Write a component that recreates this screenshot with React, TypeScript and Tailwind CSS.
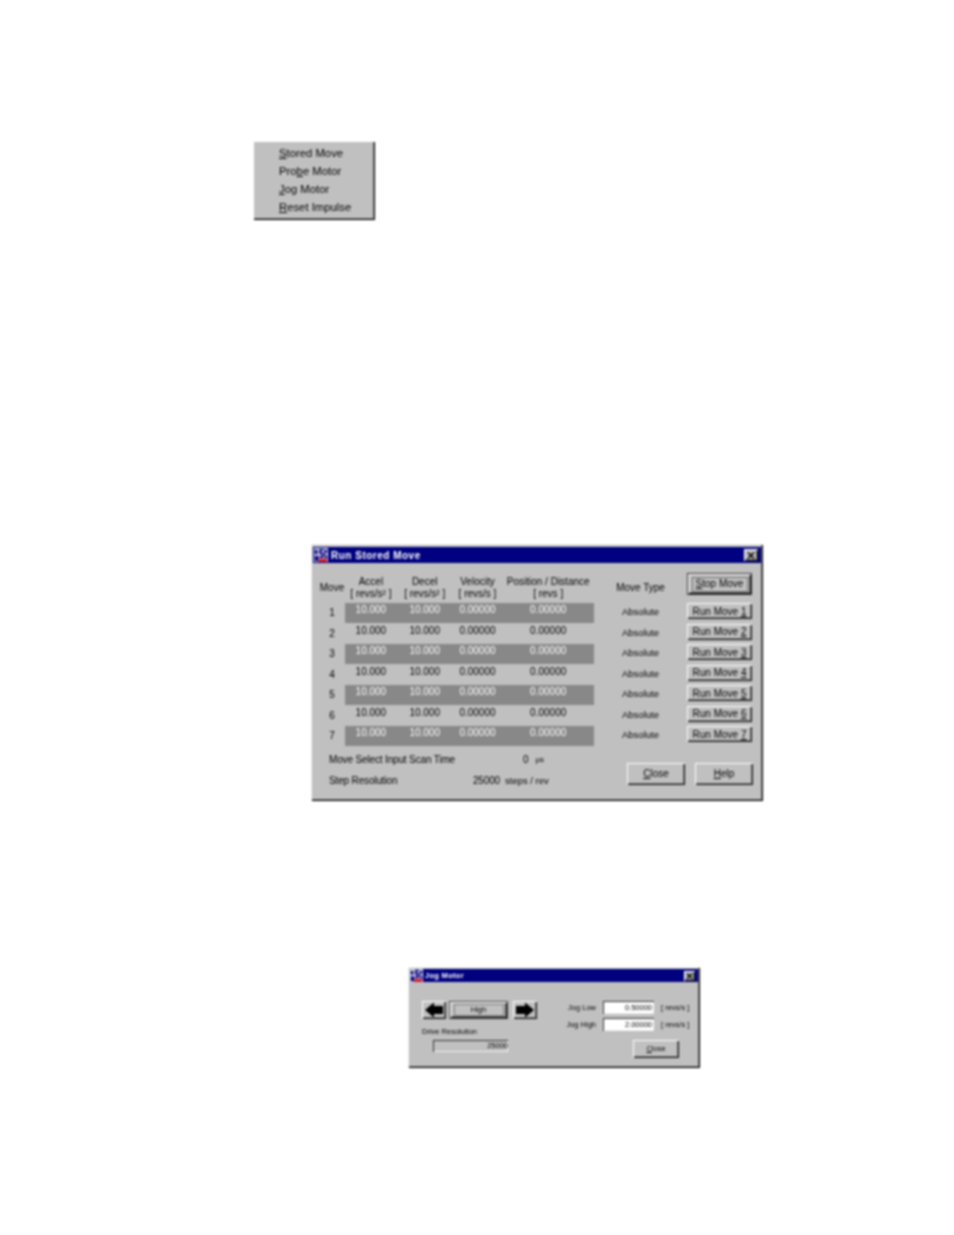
const moves = [1, 2, 3, 4, 5, 6, 7];

const raised = "bg-[#c0c0c0] shadow-[inset_1px_1px_0_#ffffff,inset_-1px_-1px_0_#181818,inset_-2px_-2px_0_#707070]";
const sunken = "shadow-[inset_1px_1px_0_#303030,inset_-1px_-1px_0_#f0f0f0]";

function AppIcon({ size }: { size: number }) {
  return (
    <svg width={size} height={size} viewBox="0 0 16 16" className="shrink-0">
      <rect width="16" height="16" fill="#d8d8e8" />
      <path d="M1 2h3v5H1zM6 1h5v2H8v2h3v6H6V9h3V7H6zM12 2h3v2l-2 3 2 3v2h-2l-1-3z" fill="#000080" />
      <rect x="1" y="9" width="4" height="6" fill="#000080" />
      <rect x="5" y="12" width="10" height="4" fill="#d02030" />
    </svg>
  );
}

function CloseBox({ small }: { small?: boolean }) {
  return (
    <div className={`flex items-center justify-center ${raised} ${small ? "h-[10px] w-[11px]" : "h-[12px] w-[14px]"}`}>
      <svg width={small ? 7 : 8} height={small ? 6 : 7} viewBox="0 0 8 7">
        <path d="M1 0.5l6 6M7 0.5l-6 6" stroke="#000" strokeWidth="1.6" />
      </svg>
    </div>
  );
}

function ContextMenu() {
  return (
    <div className="ml-[253px] mt-[141px] h-[79px] w-[122px] bg-[#c0c0c0] pl-[26px] pt-[3px] text-[11.3px] leading-[18px] text-[#000000] shadow-[inset_1px_1px_0_#ffffff,inset_-1px_-1px_0_#000000,inset_-2px_-2px_0_#707070]">
      <div><u>S</u>tored Move</div>
      <div>Pro<u>b</u>e Motor</div>
      <div><u>J</u>og Motor</div>
      <div><u>R</u>eset Impulse</div>
    </div>
  );
}

function StoredMoveDialog() {
  return (
    <div className="ml-[311px] mt-[324px] h-[257px] w-[452px] bg-[#c0c0c0] px-[2px] pt-[3px] text-[10px] text-[#000000] shadow-[inset_1px_1px_0_#f0f0f0,inset_-1px_-1px_0_#000000,inset_-2px_-2px_0_#707070]">
      {/* Title bar */}
      <div className="flex h-[16px] items-center justify-between bg-[#000080] pl-[1px] pr-[3px]">
        <div className="flex items-center gap-[3px]">
          <AppIcon size={14} />
          <span className="text-[10px] font-bold tracking-[0.5px] text-[#ffffff]">Run Stored Move</span>
        </div>
        <CloseBox />
      </div>

      <div className="-mx-[2px]">
        {/* Column headers */}
        <div className="flex h-[40px] items-center pt-[10px] leading-[12px]">
          <div className="w-[34px] pl-[8px] text-center">Move</div>
          <div className="flex w-[249px] text-center">
            <div className="w-[52px]">Accel<br />[ revs/s² ]</div>
            <div className="w-[56px]">Decel<br />[ revs/s² ]</div>
            <div className="w-[50px]">Velocity<br />[ revs/s ]</div>
            <div className="w-[92px]">Position / Distance<br />[ revs ]</div>
          </div>
          <div className="w-[93px] text-center">Move Type</div>
          <div className={`flex h-[22px] w-[65px] items-center justify-center self-start border border-[#303030] ${raised}`}>
            <span className="flex h-[15px] w-[56px] items-center justify-center border border-[#707070]"><u>S</u>top Move</span>
          </div>
        </div>

        {/* Move rows */}
        <div>
          {moves.map((move) => (
            <div key={move} className="flex h-[20.5px]">
              <div className="w-[34px] pl-[8px] pt-[2px] text-center">{move}</div>
              <div className={`flex h-[20px] w-[249px] text-center leading-[14px] ${move % 2 ? "bg-[#888888] text-[#ffffff]" : "text-[#000000]"}`}>
                <div className="w-[52px]">10.000</div>
                <div className="w-[56px]">10.000</div>
                <div className="w-[50px]">0.00000</div>
                <div className="w-[92px]">0.00000</div>
              </div>
              <div className="w-[93px] pt-[2px] text-center text-[9.5px]">Absolute</div>
              <div className={`flex h-[16px] w-[65px] items-center justify-center ${raised}`}>
                <span>Run Move <u>{move}</u></span>
              </div>
            </div>
          ))}
        </div>

        {/* Footer */}
        <div className="flex">
          <div className="w-[316px] pl-[18px] pt-[2px] leading-[21px] tracking-[-0.15px]">
            <div className="flex">
              <span className="w-[194px]">Move Select Input Scan Time</span>
              <span>0</span>
              <span className="ml-[7px] text-[8px]">µs</span>
            </div>
            <div className="flex">
              <span className="w-[125px]">Step Resolution</span>
              <span className="w-[46px] text-right">25000</span>
              <span className="ml-[5px] text-[9.5px] tracking-normal">steps / rev</span>
            </div>
          </div>
          <div className="flex gap-[10px] pt-[16px]">
            <div className={`flex h-[22px] w-[58px] items-center justify-center ${raised}`}><span><u>C</u>lose</span></div>
            <div className={`flex h-[22px] w-[58px] items-center justify-center ${raised}`}><span><u>H</u>elp</span></div>
          </div>
        </div>
      </div>
    </div>
  );
}

function Arrow({ flip }: { flip?: boolean }) {
  return (
    <div className={`flex h-[18px] w-[24px] items-center justify-center ${raised}`}>
      <svg width="20" height="16" viewBox="0 0 20 16" className={flip ? "rotate-180" : ""}>
        <path d="M1 8L10 0.5V4h9v8h-9v3.5z" fill="#000" />
      </svg>
    </div>
  );
}

function JogDialog() {
  return (
    <div className="ml-[408px] mt-[166px] h-[101px] w-[292px] bg-[#c0c0c0] px-[2px] pt-[2px] text-[7.5px] text-[#000000] shadow-[inset_1px_1px_0_#f0f0f0,inset_-1px_-1px_0_#000000,inset_-2px_-2px_0_#707070]">
      <div className="flex h-[13px] items-center justify-between bg-[#000080] pr-[3px]">
        <div className="flex items-center gap-[2px]">
          <AppIcon size={13} />
          <span className="text-[7.5px] font-bold tracking-[0.3px] text-[#ffffff]">Jog Motor</span>
        </div>
        <CloseBox small />
      </div>

      <div className="-mx-[2px] flex pt-[19px]">
        {/* Jog buttons */}
        <div className="w-[150px] pl-[14px]">
          <div className="flex">
            <Arrow />
            <div className={`ml-[3px] flex h-[18px] w-[59px] items-center justify-center border border-[#404040] ${raised}`}>
              <span className="flex h-[12px] w-[50px] items-center justify-center border border-[#808080]">High</span>
            </div>
            <div className="ml-[5px]"><Arrow flip /></div>
          </div>
          <div className="mt-[8px] leading-[9px]">Drive Resolution</div>
          <div className={`ml-[11px] mt-[4px] flex h-[12px] w-[75px] items-center justify-end ${sunken}`}>25000</div>
        </div>

        {/* Jog speeds */}
        <div className="-mt-[2px] w-[142px]">
          <div className="flex h-[17px] items-center">
            <span className="w-[38px] text-right">Jog Low</span>
            <div className={`ml-[7px] flex h-[13px] w-[51px] items-center justify-end bg-white pr-[2px] ${sunken}`}>0.50000</div>
            <span className="ml-[7px]">[ revs/s ]</span>
          </div>
          <div className="flex h-[17px] items-center">
            <span className="w-[38px] text-right">Jog High</span>
            <div className={`ml-[7px] flex h-[13px] w-[51px] items-center justify-end bg-white pr-[2px] ${sunken}`}>2.00000</div>
            <span className="ml-[7px]">[ revs/s ]</span>
          </div>
          <div className={`ml-[75px] mt-[7px] flex h-[18px] w-[46px] items-center justify-center ${raised}`}><span><u>C</u>lose</span></div>
        </div>
      </div>
    </div>
  );
}

export default function App() {
  return (
    <div className="h-[1235px] w-[954px] overflow-hidden bg-white font-['Liberation_Sans',Arial,sans-serif]">
      <div className="flow-root blur-[0.8px]">
        <ContextMenu />
        <StoredMoveDialog />
        <JogDialog />
      </div>
    </div>
  );
}
